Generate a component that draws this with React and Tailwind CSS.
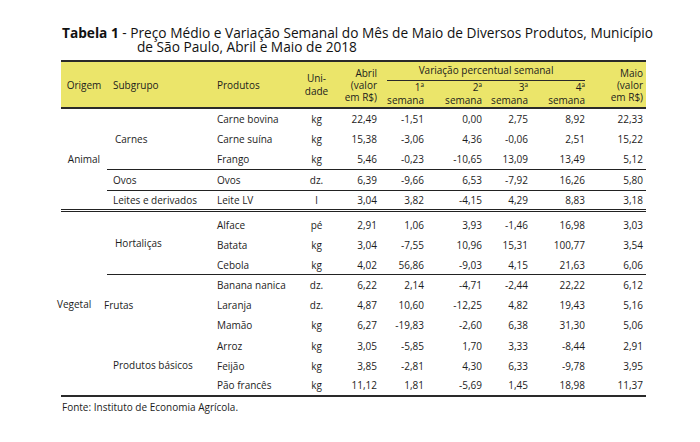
const animal = [
  ["Carne bovina", "kg", "22,49", "-1,51", "0,00", "2,75", "8,92", "22,33"],
  ["Carne suína", "kg", "15,38", "-3,06", "4,36", "-0,06", "2,51", "15,22"],
  ["Frango", "kg", "5,46", "-0,23", "-10,65", "13,09", "13,49", "5,12"],
  ["Ovos", "dz.", "6,39", "-9,66", "6,53", "-7,92", "16,26", "5,80"],
  ["Leite LV", "l", "3,04", "3,82", "-4,15", "4,29", "8,83", "3,18"],
];

const vegetal = [
  ["Alface", "pé", "2,91", "1,06", "3,93", "-1,46", "16,98", "3,03"],
  ["Batata", "kg", "3,04", "-7,55", "10,96", "15,31", "100,77", "3,54"],
  ["Cebola", "kg", "4,02", "56,86", "-9,03", "4,15", "21,63", "6,06"],
  ["Banana nanica", "dz.", "6,22", "2,14", "-4,71", "-2,44", "22,22", "6,12"],
  ["Laranja", "dz.", "4,87", "10,60", "-12,25", "4,82", "19,43", "5,16"],
  ["Mamão", "kg", "6,27", "-19,83", "-2,60", "6,38", "31,30", "5,06"],
  ["Arroz", "kg", "3,05", "-5,85", "1,70", "3,33", "-8,44", "2,91"],
  ["Feijão", "kg", "3,85", "-2,81", "4,30", "6,33", "-9,78", "3,95"],
  ["Pão francês", "kg", "11,12", "1,81", "-5,69", "1,45", "18,98", "11,37"],
];

const Cells = ({ row, line, top }) => {
  const b = `${line ? "border-t border-[#222]" : ""} ${top ? "pt-[4px]" : ""}`;
  return (
    <>
      <td className={`pl-[4px] whitespace-nowrap ${b}`}>{row[0]}</td>
      <td className={`text-center ${b}`}>{row[1]}</td>
      {row.slice(2).map((v, i) => (
        <td key={i} className={`text-right pr-[3px] ${b}`}>
          {v}
        </td>
      ))}
    </>
  );
};

export default function App() {
  return (
    <div className="w-[700px] h-[442px] bg-white text-[#1c1c1c] font-['Open_Sans',sans-serif] pt-[26px]">
      <div className="pl-[62px] text-[13.7px] leading-[14px] text-[#111] whitespace-nowrap">
        <div>
          <span className="font-bold">Tabela 1</span> - Preço Médio e Variação Semanal do Mês de Maio de Diversos Produtos, Município
        </div>
        <div className="pl-[75px]">de São Paulo, Abril e Maio de 2018</div>
      </div>

      <table className="ml-[61px] mt-[6px] w-[585px] table-fixed border-collapse text-[10px] leading-[12px]">
        <colgroup>
          <col className="w-[46px]" />
          <col className="w-[106px]" />
          <col className="w-[87px]" />
          <col className="w-[33px]" />
          <col className="w-[47px]" />
          <col className="w-[47px]" />
          <col className="w-[58px]" />
          <col className="w-[46px]" />
          <col className="w-[57px]" />
          <col className="w-[58px]" />
        </colgroup>
        <thead className="bg-[#ebe56a]">
          <tr className="h-[20px] border-t-2 border-[#2a2a2a]">
            <th rowSpan={2} className="font-normal text-center align-middle">Origem</th>
            <th rowSpan={2} className="font-normal text-left pl-[6px] align-middle">Subgrupo</th>
            <th rowSpan={2} className="font-normal text-left pl-[4px] align-middle">Produtos</th>
            <th rowSpan={2} className="font-normal text-center align-middle leading-[13px]">
              Uni-
              <br />
              dade
            </th>
            <th rowSpan={2} className="font-normal text-right pr-[3px] align-middle">
              Abril
              <br />
              (valor
              <br />
              em R$)
            </th>
            <th colSpan={4} className="font-normal text-center align-middle pl-[4px]">
              <div className="mx-[3px] border-b border-[#2a2a2a] pb-[4px] pt-[2px]">Variação percentual semanal</div>
            </th>
            <th rowSpan={2} className="font-normal text-right pr-[3px] align-middle">
              Maio
              <br />
              (valor
              <br />
              em R$)
            </th>
          </tr>
          <tr className="h-[24px] border-b-2 border-[#2a2a2a]">
            {["1ª", "2ª", "3ª", "4ª"].map((w) => (
              <th key={w} className="font-normal text-right pr-[3px] align-bottom leading-[13px]">
                {w}
                <br />
                semana
              </th>
            ))}
          </tr>
        </thead>
        <tbody>
          {animal.map((r, i) => (
            <tr key={r[0]} className={`h-[20.5px] ${i === 4 ? "border-b-[3px] border-double border-[#222]" : ""}`}>
              {i === 0 && (
                <td rowSpan={5} className="text-center align-middle">
                  Animal
                </td>
              )}
              {i === 0 && (
                <td rowSpan={3} className="pl-[8px] align-middle">
                  Carnes
                </td>
              )}
              {i === 3 && <td className="pl-[6px] border-t border-[#222]">Ovos</td>}
              {i === 4 && <td className="pl-[6px] whitespace-nowrap border-t border-[#222]">Leites e derivados</td>}
              <Cells row={r} line={i >= 3} />
            </tr>
          ))}
          {vegetal.map((r, i) => (
            <tr key={r[0]} className={`${i === 0 ? "h-[24px]" : "h-[20.2px]"} ${i === 8 ? "border-b-2 border-[#2a2a2a]" : ""}`}>
              {i === 0 && (
                <td rowSpan={9} className="align-middle whitespace-nowrap">
                  <span className="inline-block -ml-[4px]">Vegetal</span>
                </td>
              )}
              {i === 0 && (
                <td rowSpan={3} className="pl-[8px] align-middle">
                  Hortaliças
                </td>
              )}
              {i === 3 && (
                <td rowSpan={3} className="align-middle border-t border-[#222]">
                  <span className="inline-block -ml-[3px]">Frutas</span>
                </td>
              )}
              {i === 6 && (
                <td rowSpan={3} className="pl-[6px] align-middle whitespace-nowrap">
                  Produtos básicos
                </td>
              )}
              <Cells row={r} line={i === 3} top={i === 0} />
            </tr>
          ))}
        </tbody>
      </table>

      <div className="pl-[62px] mt-[4px] text-[10px] leading-[12px]">Fonte: Instituto de Economia Agrícola.</div>
    </div>
  );
}
